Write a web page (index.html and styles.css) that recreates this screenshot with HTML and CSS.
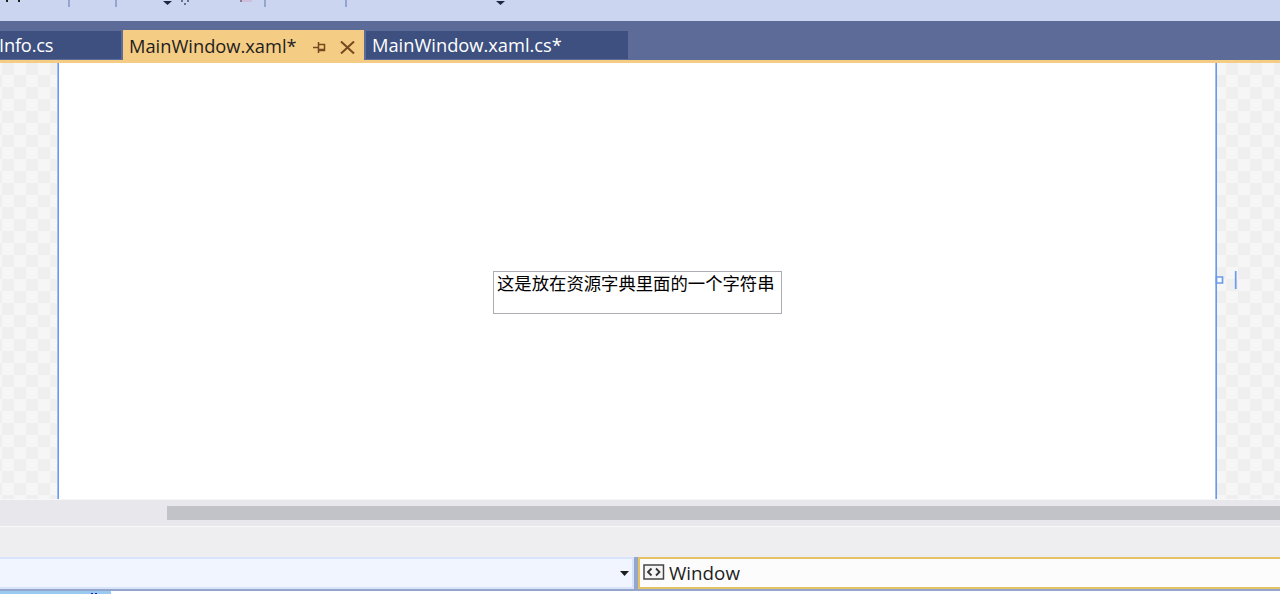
FILE: index.html
```html
<!DOCTYPE html>
<html lang="zh-CN">
<head>
<meta charset="UTF-8">
<title>MainWindow.xaml</title>
<link rel="stylesheet" href="styles.css">
</head>
<body>

<div class="toolbar">
  <svg width="520" height="8" viewBox="0 0 520 8">
    <path d="M6 0h2v2h-2zM18 0h2v2h-2z" fill="#1e1e1e"/>
    <path d="M68 0h2v7h-2zM115 0h2v7h-2zM264 0h2v7h-2zM345 0h2v7h-2z" fill="#94a6cf"/>
    <path d="M163 1h9l-4.500 4zM496 1h9l-4.500 4z" fill="#1b293e"/>
    <path d="M181 0h2v2h-2zM187 0h2v2h-2zM184 3h2v2h-2z" fill="#6b6f88"/>
    <path d="M240 0h2v2h-2z" fill="#8a7f96"/>
    <path d="M242 0h10v2h-10z" fill="#cdbfdd"/>
  </svg>
</div>

<div class="tabs">
  <div class="tab tab-info"><span>Info.cs</span></div>
  <div class="tab active">
    <span>MainWindow.xaml*</span>
    <svg class="pin" width="13" height="12" viewBox="0 0 13 12">
      <path d="M0 5.500h5M5.500 0v11M5.500 2.500h6v6h-6M6 7.500h6" fill="none" stroke="#75481f" stroke-width="1.500"/>
    </svg>
    <svg class="close" width="15" height="13" viewBox="0 0 15 13">
      <path d="M1 .5l13 12M14 .5l-13 12" fill="none" stroke="#75481f" stroke-width="2"/>
    </svg>
  </div>
  <div class="tab tab-code"><span>MainWindow.xaml.cs*</span></div>
</div>

<div class="designer">
  <div class="window">
    <div class="textbox">这是放在资源字典里面的一个字符串</div>
  </div>
  <!-- resize grip on the window edge -->
  <svg class="grip" width="24" height="20" viewBox="0 0 24 20">
    <path d="M1.500 7h6v6h-6z" fill="#fff" stroke="#6b9bee" stroke-width="1.700"/>
    <path d="M20.700 1v18" stroke="#6b9bee" stroke-width="1.700"/>
  </svg>
</div>

<div class="scrollbar"><div class="thumb"></div></div>
<div class="splitter"></div>

<div class="navbar">
  <div class="combo">
    <svg width="9" height="5" viewBox="0 0 9 5"><path d="M0 0h9l-4.500 5z" fill="#1e1e1e"/></svg>
  </div>
  <div class="combo selected">
    <svg width="22" height="16" viewBox="0 0 22 16">
      <path d="M1 1h19.500v14h-19.500z" fill="#f5f5f5" stroke="#454545" stroke-width="1.500"/>
      <path d="M8.500 4.500l-3.500 3.500 3.500 3.500M13 4.500l3.500 3.500-3.500 3.500" fill="none" stroke="#333" stroke-width="1.800"/>
    </svg>
    <span>Window</span>
  </div>
</div>

<div class="editor">
  <div class="selection">
    <svg width="8" height="1" viewBox="0 0 8 1"><path d="M1 0h2v1h-2zM5 0h2v1h-2z" fill="#2222a8"/></svg>
  </div>
</div>

</body>
</html>
```
FILE: styles.css
```css
body {
  margin: 0;
  height: 594px;
  overflow: hidden;
  display: flex;
  flex-direction: column;
  background-color: white;
  font-family: "Open Sans", "Noto Sans", "Noto Sans CJK SC", sans-serif;
  font-size: 18.3px;
  color: #1e1e1e;
}
body > div {
  flex-shrink: 0;
}
svg {
  display: block;
  flex-shrink: 0;
}
.toolbar {
  height: 21px;
  background-color: #ccd5f0;
}
.tabs {
  display: flex;
  align-items: flex-end;
  height: 39px;
  background-color: #5d6b99;
  border-bottom: 3px solid #f5cc84;
}
.tab {
  display: flex;
  align-items: center;
  box-sizing: border-box;
  height: 28px;
  margin-bottom: 1px;
  padding-bottom: 2px;
  background-color: #3d5080;
  color: white;
  white-space: nowrap;
}
.tab-info {
  width: 121px;
  margin-right: 2px;
}
.tab-info span {
  margin-left: -1px;
  letter-spacing: -0.2px;
}
.tab-code {
  width: 262px;
  margin-left: 2px;
  padding-left: 6px;
}
.tab.active {
  width: 241px;
  height: 30px;
  margin-bottom: 0;
  padding: 1px 0 0 6px;
  background-color: #f5cc84;
  color: #1e1e1e;
}
.tab.active span {
  width: 168px;
}
.pin {
  margin: 4px 0 0 16px;
}
.close {
  margin: 4px 0 0 14px;
}
/* Checkerboard artboard */
.designer {
  position: relative;
  height: 436px;
  background: repeating-conic-gradient(#efefef 0% 25%, #f6f6f6 0% 50%) -10px 0 / 24px 24px;
}
.window {
  box-sizing: border-box;
  width: 1160px;
  height: 436px;
  margin-left: 57px;
  padding: 208px 0 0 435px;
  border-left: 1px solid #a3bde9;
  border-right: 1px solid #649af5;
  box-shadow: inset 1px 0 #649af5, inset -1px 0 #a3bde9;
  background-color: white;
}
.textbox {
  box-sizing: border-box;
  width: 289px;
  height: 43px;
  padding-left: 3px;
  border: 1px solid #abadb3;
  font-family: "Noto Sans CJK SC", sans-serif;
  font-size: 17.35px;
  line-height: 22px;
  color: black;
  white-space: nowrap;
}
.grip {
  position: absolute;
  left: 1215px;
  top: 207px;
}
.scrollbar {
  box-sizing: border-box;
  height: 28px;
  padding: 6px 0 6px 167px;
  background-color: #e7e7ec;
  border-top: 1px solid #f6f6f6;
  border-bottom: 1px solid #f8f8f8;
}
.thumb {
  height: 14px;
  background-color: #c2c3c9;
}
.splitter {
  height: 30px;
  background-color: #eeeef0;
}
.navbar {
  display: flex;
  gap: 4px;
  height: 32px;
  background-color: #95a6cd;
  border-bottom: 2px solid #95a6cd;
}
.combo {
  display: flex;
  align-items: center;
  justify-content: flex-end;
  box-sizing: border-box;
  width: 634px;
  padding-right: 3px;
  border: solid #d7e4fb;
  border-width: 2px 2px 2px 0;
  background-color: #f1f5ff;
}
.combo.selected {
  flex: 1;
  justify-content: flex-start;
  gap: 4px;
  padding-left: 3px;
  border: solid #e5c365;
  border-width: 2px 0 2px 2px;
  background-color: #fcfcfc;
  font-size: 18.8px;
}
.combo.selected svg {
  margin-top: -2px;
}
.editor {
  height: 3px;
}
.selection {
  box-sizing: border-box;
  width: 111px;
  height: 3px;
  padding: 2px 0 0 90px;
  background-color: #99c9ef;
}
```
